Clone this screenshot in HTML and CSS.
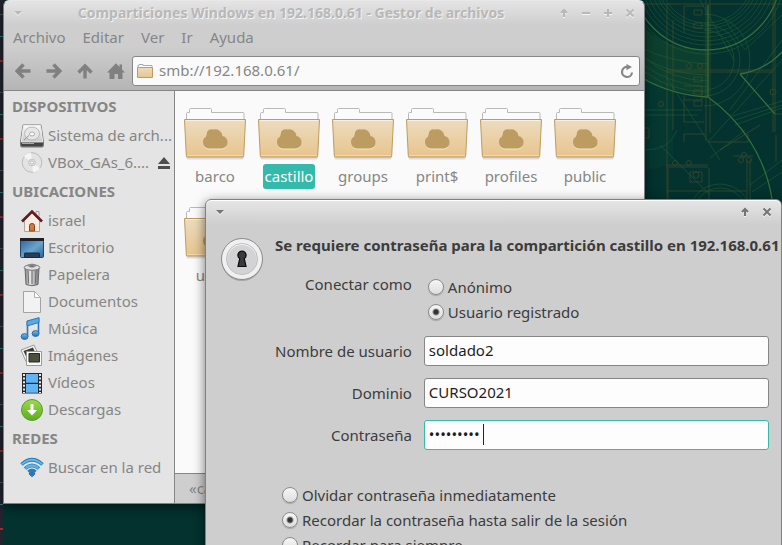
FILE: index.html
```html
<!DOCTYPE html>
<html lang="es">
<head>
<meta charset="utf-8">
<title>Gestor de archivos</title>
<link rel="stylesheet" href="styles.css">
</head>
<body>
<svg class="defs" width="0" height="0" aria-hidden="true">
  <defs>
    <linearGradient id="gFolder" x1="0" y1="0" x2="0" y2="1"><stop offset="0" stop-color="#ecdcc0"/><stop offset="1" stop-color="#e8c48c"/></linearGradient>
    <linearGradient id="gGrey" x1="0" y1="0" x2="0" y2="1"><stop offset="0" stop-color="#fafafa"/><stop offset="1" stop-color="#c8c8c8"/></linearGradient>
    <linearGradient id="gBlue" x1="0" y1="0" x2="0" y2="1"><stop offset="0" stop-color="#72bdf0"/><stop offset="1" stop-color="#2a6cae"/></linearGradient>
    <linearGradient id="gGreen" x1="0" y1="0" x2="0" y2="1"><stop offset="0" stop-color="#9bdb4d"/><stop offset="1" stop-color="#5cab22"/></linearGradient>
    <linearGradient id="gDesk" x1="0" y1="0" x2="1" y2="1"><stop offset="0" stop-color="#2c5f97"/><stop offset=".55" stop-color="#68a5cd"/><stop offset="1" stop-color="#2a6297"/></linearGradient>
    <linearGradient id="gTrash" x1="0" y1="0" x2="1" y2="0"><stop offset="0" stop-color="#7d7d80"/><stop offset=".35" stop-color="#e8e8ea"/><stop offset="1" stop-color="#77777b"/></linearGradient>
    <symbol id="folder" viewBox="0 0 64 54">
      <path d="M3 49.5h58l-1 3H4z" fill="#000" opacity=".12"/>
      <path d="M3.500 20V6.500q0-1 1-1h2v-3q0-1 1-1h20q1 0 1 1v3h31.500q1 0 1 1V20z" fill="#fbfbfb" stroke="#b9b9b9"/>
      <path d="M1.500 12.500h61l-1.800 36.500q-.1 1-1 1H4.300q-.9 0-1-1z" fill="url(#gFolder)" stroke="#bd9c5e"/>
      <path d="M2.600 13.500h58.800" stroke="#f8efdc" fill="none"/>
      <path d="M4 48.500h56" stroke="#f2d9ae" fill="none"/>
      <path d="M26 42.500h13a6 6 0 0 0 5-5.500a6.500 6.500 0 0 0-4.500-7 7.500 7.500 0 0 0-10-7 4.800 4.800 0 0 0-6.500 5q-.3 1-.5 2a6.500 6.500 0 0 0-2.500 5.500a6.500 6.500 0 0 0 6 7z" fill="#f5e6c9"/>
      <path d="M26 41.500h13a6 6 0 0 0 5.500-6a6 6 0 0 0-5-6.500 7.500 7.500 0 0 0-9.500-6.500 5 5 0 0 0-6.500 5q-.2 1-.5 2a6.300 6.300 0 0 0-3 6a6 6 0 0 0 6 6z" fill="#bd9c62"/>
    </symbol>
  </defs>
</svg>

<div class="desktop">
  <svg class="wallpaper" width="140" height="200" viewBox="642 0 140 200" fill="none" aria-hidden="true">
    <path d="M642 24Q662 50 708 50V96Q668 92 642 78z" fill="#12472f" opacity=".6"/>
    <path d="M642 75h31v85q-10 10-31 10z" fill="#0a4034" opacity=".4"/>
    <g stroke="#2a6438" stroke-width=".7" opacity=".7">
      <circle cx="706" cy="-24" r="47"/><circle cx="706" cy="-24" r="50"/><circle cx="706" cy="-24" r="53"/><circle cx="706" cy="-24" r="57"/>
      <circle cx="706" cy="-24" r="61"/><circle cx="706" cy="-24" r="65"/><circle cx="706" cy="-24" r="69"/><circle cx="706" cy="-24" r="78"/>
      <path d="M645 58Q670 80 708 81M645 66Q672 85 708 87M645 72Q672 92 708 92"/>
      <path d="M704 24a36 36 0 0 1 0 72M704 14a46 46 0 0 1 0 92M704 30a30 30 0 0 1 0 60"/>
      <circle cx="720" cy="215" r="31"/><circle cx="720" cy="215" r="27"/>
      <path d="M642 48Q670 62 708 64M642 57Q672 75 708 75M735 120l47-15M733 116l49-15M735 125l47-17M730 110l52-70M665 75l55 85M708 142l74-82M745 130l-35 28M700 0l34 60M660 145l50 50M725 20l20 30 37-35M642 110h60M642 115h56M645 150q25 0 32-20M750 185l32-25M752 192l30-20"/>
    </g>
    <g stroke="#34703a" stroke-width="1.300">
      <circle cx="706" cy="-24" r="74"/>
      <path d="M708 5v92M642 78Q672 95 708 97C740 120 765 155 772 199M740 74q25-4 42-22M740 74l35 40"/>
    </g>
    <g stroke="#48502c" opacity=".65">
      <path d="M706 0v133M710 0v133M642 4h140M667 4v195M673 20v110M666 70h106M666 72h106M773 0v132M775 0v132M708 142h40v-8M642 128h7v10h-7M684 95v27h20M684 100h18v-14h-18M684 142v-8h22v7M666 165h42M666 167h42M668 168v31M709 168v31M747 160v39M750 160v39M666 191h80M775 114h7M684 32v-26h20M776 135v27M690 172h12v10h-12z"/>
      <path d="M694 90h8v5h-8zM694 77h8v5h-8zM694 101h8v5h-8zM694 10h8v5h-8zM694 23h8v5h-8zM733 156l20 0M720 150l40-25"/>
      <circle cx="689" cy="66" r="2.500"/><circle cx="700" cy="66" r="2.500"/><circle cx="675" cy="163" r="2.500"/><circle cx="689" cy="163" r="2.500"/><circle cx="741" cy="160" r="2.500"/><circle cx="749" cy="160" r="2.500"/><circle cx="744" cy="155" r="2.500"/><circle cx="696" cy="175" r="3"/><circle cx="661" cy="104" r="2.500"/><circle cx="773" cy="92" r="3"/>
    </g>
  </svg>
  <div class="edge"></div>

  <main class="window files">
    <header class="titlebar faded">
      <button class="wbtn" aria-label="Menú de la ventana"><svg width="10" height="6" viewBox="0 0 10 6"><path d="M1 1h8L5 5z" fill="currentColor"/></svg></button>
      <h1 class="title">Comparticiones Windows en 192.168.0.61 - Gestor de archivos</h1>
      <button class="wbtn" aria-label="Enrollar"><svg width="10" height="10" viewBox="0 0 10 10"><path d="M5 9V2M2 5l3-3 3 3" fill="none" stroke="currentColor" stroke-width="2"/></svg></button>
      <button class="wbtn" aria-label="Minimizar"><svg width="10" height="10" viewBox="0 0 10 10"><path d="M1 5h8" stroke="currentColor" stroke-width="2"/></svg></button>
      <button class="wbtn" aria-label="Maximizar"><svg width="10" height="10" viewBox="0 0 10 10"><path d="M1 5h8M5 1v8" stroke="currentColor" stroke-width="2"/></svg></button>
      <button class="wbtn" aria-label="Cerrar"><svg width="10" height="10" viewBox="0 0 10 10"><path d="M1.500 1.500l7 7M8.500 1.500l-7 7" stroke="currentColor" stroke-width="2"/></svg></button>
    </header>
    <nav class="menubar">
      <button>Archivo</button><button>Editar</button><button>Ver</button><button>Ir</button><button>Ayuda</button>
    </nav>
    <div class="toolbar">
      <button class="tool" aria-label="Atrás"><svg width="16" height="16" viewBox="0 0 16 16"><path d="M15.500 8H3M8.500 1.500L2.200 8l6.300 6.500" fill="none" stroke="currentColor" stroke-width="3.400"/></svg></button>
      <button class="tool" aria-label="Adelante"><svg width="16" height="16" viewBox="0 0 16 16"><path d="M.5 8H13M7.500 1.500L13.800 8l-6.300 6.500" fill="none" stroke="currentColor" stroke-width="3.400"/></svg></button>
      <button class="tool" aria-label="Subir"><svg width="16" height="16" viewBox="0 0 16 16"><path d="M8 15.500V3M1.500 9.500L8 3l6.500 6.500" fill="none" stroke="currentColor" stroke-width="3.400"/></svg></button>
      <button class="tool" aria-label="Carpeta personal"><svg width="18" height="16" viewBox="0 0 18 16"><path d="M9 .3l3.500 3.600V1.500h2.500v4.900L18 9.500h-2.500V16H11v-5H7.500v5h-5V9.500H0z" fill="currentColor"/></svg></button>
      <div class="location">
        <svg width="16" height="14" viewBox="0 0 16 14"><path d="M1 5V1.500h1V.5h4v1h9V5" fill="#fff" stroke="#aaa"/><path d="M.5 3.500h15v10H.5z" fill="url(#gFolder)" stroke="#bd9c5e"/></svg>
        <input type="text" aria-label="Ubicación" value="smb://192.168.0.61/">
        <button aria-label="Recargar"><svg width="14" height="15" viewBox="0 0 14 15"><path d="M7.500 3A5 5 0 1 0 12 8.500" fill="none" stroke="currentColor" stroke-width="2.200"/><path d="M6.500 0l5.500 3-5.500 3.200z" fill="currentColor"/></svg></button>
      </div>
    </div>
    <div class="panes">
      <aside class="sidebar">
        <h2>DISPOSITIVOS</h2>
        <ul>
          <li><a href="#"><svg viewBox="0 0 24 24"><path d="M3 1h18l2.500 17v3.500q0 1.500-1.500 1.500H2Q.5 23 .5 21.500V18z" fill="#b4b4b4" stroke="#777"/><path d="M3.500 1.500h17L22.700 18H1.300z" fill="url(#gGrey)" stroke="#eee"/><ellipse cx="12" cy="9.500" rx="7.500" ry="6.500" fill="#e6e6e6" stroke="#b9b9b9"/><ellipse cx="12" cy="10" rx="2.500" ry="2" fill="#fff" stroke="#aaa"/><path d="M4 16l5-4.500" stroke="#999"/><path d="M1 18.500h22V21q0 1.500-1.500 1.500h-19Q1 22.500 1 21z" fill="#454545"/><path d="M2 19.500h12" stroke="#aaa"/></svg><span>Sistema de arch...</span></a></li>
          <li><a href="#"><svg viewBox="0 0 24 24"><circle cx="12" cy="11.500" r="9.800" fill="#e3e3e3" stroke="#bbb"/><path d="M12 11.500L4 5.500a10 10 0 0 1 7-4z" fill="#f5f5f5"/><path d="M12 11.500l8 6a10 10 0 0 1-7 4z" fill="#f5f5f5"/><circle cx="12" cy="11.500" r="3.500" fill="#ddd" stroke="#c3c9d2"/><circle cx="12" cy="11.500" r="1.500" fill="#fff" stroke="#bbb"/></svg><span>VBox_GAs_6....</span></a><button class="eject" aria-label="Expulsar"><svg width="12" height="12" viewBox="0 0 12 12"><path d="M6 0l6 7H0zM0 9h12v3H0z" fill="currentColor"/></svg></button></li>
        </ul>
        <h2>UBICACIONES</h2>
        <ul>
          <li><a href="#"><svg viewBox="0 0 24 24"><path d="M16 2.500h3V9h-3z" fill="#f3e7df" stroke="#b09b8d"/><path d="M4.500 11.500L12 4l7.500 7.500v11h-15z" fill="#f8ece3" stroke="#b8a294"/><path d="M9.500 22v-5.500q0-2 2.500-2t2.500 2V22z" fill="#cc7d3b" stroke="#85461c"/><path d="M2 12.500L12 2.500l10 10" fill="none" stroke="#5e1c20" stroke-width="2.600"/></svg><span>israel</span></a></li>
          <li><a href="#"><svg viewBox="0 0 24 24"><rect x=".5" y="2.500" width="23" height="19" rx="1" fill="url(#gDesk)" stroke="#244567"/><path d="M0 2h24v3H0z" fill="#1d1f24"/><path d="M4.500 21.500v-4q0-.5.5-.5h14q.5 0 .5.500v4z" fill="#263f58" stroke="#192b40"/></svg><span>Escritorio</span></a></li>
          <li><a href="#"><svg viewBox="0 0 24 24"><path d="M5 5h14l-1 16.500q-6 2.500-12 0z" fill="url(#gTrash)" stroke="#6a6a6d"/><path d="M8 7.500l.6 13M12 8v13M16 7.500l-.6 13" stroke="#6a6a6d" fill="none"/><ellipse cx="12" cy="4.500" rx="7.800" ry="2.800" fill="#dededf" stroke="#717174"/><ellipse cx="12" cy="3.300" rx="3" ry="1.200" fill="#77777a"/><path d="M8.500 3.500V2q3.500-2 7 0v1.500" fill="none" stroke="#88888b"/></svg><span>Papelera</span></a></li>
          <li><a href="#"><svg viewBox="0 0 24 24"><path d="M3.500 1.500h11l6 6v15h-17z" fill="#f2f2f2" stroke="#a3a3a3"/><path d="M14.500 1.500v6h6z" fill="#fff" stroke="#b0b0b0"/></svg><span>Documentos</span></a></li>
          <li><a href="#"><svg viewBox="0 0 24 24"><path d="M7.500 19V4.500L18.500 1.500V16" fill="none" stroke="#2f75b8" stroke-width="1.600"/><path d="M7 4l12-3.300v4.800L7 9z" fill="#58a9e8" stroke="#3379b9"/><ellipse cx="4.600" cy="19.500" rx="3.500" ry="2.900" fill="url(#gBlue)" stroke="#2e6fae"/><ellipse cx="15.600" cy="16.500" rx="3.500" ry="2.900" fill="url(#gBlue)" stroke="#2e6fae"/></svg><span>Música</span></a></li>
          <li><a href="#"><svg viewBox="0 0 24 24"><path d="M1 6L14 1l5 11L6 17.500z" fill="#f4f4f4" stroke="#999"/><path d="M3.500 7L13 3.500l3 7L7 14.500z" fill="#3b3c31"/><path d="M6.500 7.500h15v14h-15z" fill="#fafafa" stroke="#999"/><path d="M9 9.500h10.500v8.500H9z" fill="#4c4f3d" stroke="#272821"/></svg><span>Imágenes</span></a></li>
          <li><a href="#"><svg viewBox="0 0 24 24"><path d="M2 2h20v20.500H2z" fill="#27292c"/><path d="M6 3h12v8.800H6zM6 13h12v8.700H6z" fill="#63b3f4"/><path d="M4 3v19M20 3v19" stroke="#eee" stroke-width="2" stroke-dasharray="2 1.600"/></svg><span>Vídeos</span></a></li>
          <li><a href="#"><svg viewBox="0 0 24 24"><circle cx="12" cy="12" r="10.500" fill="url(#gGreen)" stroke="#58a026"/><path d="M10.500 6h3v6H17l-5 5.500L7 12h3.500z" fill="#fff"/></svg><span>Descargas</span></a></li>
        </ul>
        <h2>REDES</h2>
        <ul>
          <li><a href="#"><svg viewBox="0 0 24 24"><g fill="none" stroke="#2c7cb8" stroke-width="3.600"><path d="M1.500 8.500Q12-1 22.500 8.500M5 12.500q7-6.300 14 0M8.500 16q3.500-3.300 7 0"/></g><g fill="none" stroke="#5fb6e8" stroke-width="2"><path d="M2 8.300Q12-.7 22 8.300M5.500 12.300q6.500-5.900 13 0"/></g><path d="M12 16.200l3 1.600-3 3-3-3z" fill="#3575b5" stroke="#2c68a6"/></svg><span>Buscar en la red</span></a></li>
        </ul>
      </aside>
      <section class="content">
        <div class="icons">
          <a class="item" href="#"><svg><use href="#folder"/></svg><span>barco</span></a>
          <a class="item selected" href="#"><svg><use href="#folder"/></svg><span>castillo</span></a>
          <a class="item" href="#"><svg><use href="#folder"/></svg><span>groups</span></a>
          <a class="item" href="#"><svg><use href="#folder"/></svg><span>print$</span></a>
          <a class="item" href="#"><svg><use href="#folder"/></svg><span>profiles</span></a>
          <a class="item" href="#"><svg><use href="#folder"/></svg><span>public</span></a>
          <a class="item" href="#"><svg><use href="#folder"/></svg><span>users</span></a>
        </div>
        <footer class="status">«castillo»</footer>
      </section>
    </div>
  </main>

  <form class="window dialog">
    <header class="titlebar">
      <button type="button" class="wbtn" aria-label="Menú de la ventana"><svg width="10" height="6" viewBox="0 0 10 6"><path d="M1 1h8L5 5z" fill="currentColor"/></svg></button>
      <span class="title"></span>
      <button type="button" class="wbtn" aria-label="Enrollar"><svg width="10" height="10" viewBox="0 0 10 10"><path d="M5 9V2M2 5l3-3 3 3" fill="none" stroke="currentColor" stroke-width="2"/></svg></button>
      <button type="button" class="wbtn" aria-label="Cerrar"><svg width="10" height="10" viewBox="0 0 10 10"><path d="M1.500 1.500l7 7M8.500 1.500l-7 7" stroke="currentColor" stroke-width="2"/></svg></button>
    </header>
    <div class="dialog-body">
      <svg class="lock" width="42" height="44" viewBox="0 0 42 44" aria-hidden="true">
        <circle cx="21" cy="22.500" r="20.500" fill="#000" opacity=".2"/>
        <circle cx="21" cy="21" r="20.500" fill="#f0f0f0" stroke="#8b8b8f"/>
        <circle cx="21" cy="21" r="15.500" fill="url(#gGrey)" stroke="#bdbdc0"/>
        <circle cx="21" cy="21.500" r="14.500" fill="#d3d3d5"/>
        <path d="M21 13a4.200 4.200 0 0 1 2.300 7.600L25 28.500h-8l1.700-7.900A4.200 4.200 0 0 1 21 13z" fill="#3a3a3a" stroke="#0c0c0c" stroke-width="1.200"/>
      </svg>
      <div class="fields">
        <h2 class="prompt">Se requiere contraseña para la compartición castillo en 192.168.0.61</h2>
        <div class="grid">
          <span class="lead" id="as">Conectar como</span>
          <div class="radios" role="radiogroup" aria-labelledby="as">
            <label><input type="radio" name="as">Anónimo</label>
            <label><input type="radio" name="as" checked>Usuario registrado</label>
          </div>
          <label for="user">Nombre de usuario</label>
          <input class="entry" id="user" type="text" value="soldado2">
          <label for="domain">Dominio</label>
          <input class="entry" id="domain" type="text" value="CURSO2021">
          <label for="pass">Contraseña</label>
          <div class="pass"><input class="entry active" id="pass" type="password" value="123456789"><i class="caret"></i></div>
        </div>
        <div class="radios remember" role="radiogroup" aria-label="Recordar contraseña">
          <label><input type="radio" name="keep">Olvidar contraseña inmediatamente</label>
          <label><input type="radio" name="keep" checked>Recordar la contraseña hasta salir de la sesión</label>
          <label><input type="radio" name="keep">Recordar para siempre</label>
        </div>
      </div>
    </div>
  </form>
</div>
</body>
</html>
```
FILE: styles.css
```css
* { box-sizing: border-box; }
body { margin: 0; overflow: hidden; font: 15px/20px "Noto Sans", "Open Sans", sans-serif; color: #868686; }
button { font: inherit; color: inherit; background: none; border: 0; padding: 0; display: flex; align-items: center; justify-content: center; }
input { font: inherit; color: inherit; margin: 0; }
a { color: inherit; text-decoration: none; }
h1, h2, ul { margin: 0; padding: 0; list-style: none; }
h1 { font-size: 14px; }
h2 { font-size: 15px; }
.defs { position: absolute; }

.desktop { position: relative; height: 100vh; overflow: hidden; background: #03322f; }
.wallpaper { position: absolute; top: 0; right: 0; }
.edge { position: absolute; inset: 0 auto 0 0; width: 3px; background: repeating-linear-gradient(#22252e 0 14px, #4d545c 14px 15px, #22252e 15px 36px, #2f7d84 36px 37px, #22252e 37px 60px, #a02a30 60px 62px, #22252e 62px 78px); }

/* windows */
.window { position: absolute; display: flex; flex-direction: column; border: 1px solid #808080; border-radius: 6px 6px 0 0; box-shadow: 0 3px 12px rgba(0, 0, 0, .55); }
.files { inset: 0 137px 41px 3px; border-top-color: #e8e8e8; background: linear-gradient(#e4e4e4, #cecece 24px, #cecece 45px, #b4b4b4 90px); }
.titlebar { display: flex; align-items: center; height: 24px; padding: 0 3px; color: #747474; }
.titlebar svg { filter: drop-shadow(0 1px 0 #f4f4f4); }
.faded { color: #b8b8b8; }
.wbtn { width: 22px; height: 22px; }
.title { flex: 1; text-align: center; text-shadow: 1px 1px 0 #f2f2f2; white-space: nowrap; }

.menubar { display: flex; align-items: flex-start; gap: 17px; height: 26px; padding: 2px 0 0 9px; }
.toolbar { display: flex; padding: 5px 4px 4px 3px; border-bottom: 1px solid #858585; }
.tool { width: 31px; height: 30px; color: #808080; }
.location { flex: 1; min-width: 0; display: flex; align-items: center; gap: 6px; margin-left: 1px; padding: 0 5px 0 4px; height: 30px; border: 1px solid #868686; border-radius: 3px; background: #fafafa; }
.location input { flex: 1; min-width: 0; padding: 0 0 2px; border: 0; background: none; outline: 0; }

.panes { flex: 1; display: flex; min-height: 0; }
.sidebar { flex: none; width: 171px; border-right: 1px solid #868686; background: #e4e4e4; overflow: hidden; }
.sidebar h2 { padding-left: 8px; line-height: 31px; }
.sidebar li { display: flex; align-items: center; height: 27px; padding: 0 4px 0 16px; }
.sidebar a { flex: 1; min-width: 0; display: flex; align-items: center; gap: 4px; }
.sidebar a svg { flex: none; width: 24px; height: 24px; }
.sidebar span { padding-bottom: 1px; white-space: nowrap; }
.eject { color: #4d4d4d; }

.content { flex: 1; min-width: 0; display: flex; flex-direction: column; background: #fafafa; }
.icons { flex: 1; display: flex; flex-wrap: wrap; align-content: flex-start; padding: 16px 3px; }
.item { width: 74px; height: 99px; display: flex; flex-direction: column; align-items: center; gap: 3px; }
.item svg { width: 64px; height: 54px; }
.item span { padding: 2px 2px 3px; border-radius: 3px; }
.selected span { background: #35b9ab; color: #fff; }
.status { height: 30px; padding: 4px 14px; border-top: 1px solid #868686; background: #cecece; }

/* password dialog */
.dialog { top: 199px; left: 205px; right: 0; min-height: calc(100vh - 199px); color: #3c3c3c; background: linear-gradient(#e6e6e6, #cecece 25px); box-shadow: inset 0 1px 0 #fff, 0 3px 12px rgba(0, 0, 0, .55); }
.dialog-body { display: flex; gap: 12px; padding: 11px 12px 20px 15px; }
.lock { flex: none; margin-top: 3px; }
.fields { flex: 1; min-width: 0; }
.prompt { white-space: nowrap; }
.grid { display: grid; grid-template-columns: auto 1fr; gap: 12px; align-items: center; margin-top: 19px; text-align: right; }
.grid > label { padding-bottom: 1px; }
.lead { align-self: start; }
.radios { display: flex; flex-direction: column; text-align: left; }
.radios label { display: flex; align-items: center; gap: 4px; height: 25px; padding-left: 4px; }
.radios input { appearance: none; width: 16px; height: 16px; border: 1px solid #8c8c8c; border-radius: 50%; background: linear-gradient(#f6f6f6, #dedede); box-shadow: 0 1px 1px rgba(0, 0, 0, .2); }
.radios input:checked { background: radial-gradient(circle, #333 0 2px, transparent 4px), linear-gradient(#f6f6f6, #dedede); }
.entry { width: 100%; height: 30px; padding: 0 4px 2px; border: 1px solid #868686; border-radius: 3px; background: #fdfdfd; color: #1e1e1e; outline: 0; }
.active { border-color: #35b9ab; }
.pass { position: relative; height: 30px; }
.caret { position: absolute; left: 59px; top: 4px; width: 1px; height: 21px; background: #222; }
.remember { margin-top: 32px; padding-left: 3px; }
```
